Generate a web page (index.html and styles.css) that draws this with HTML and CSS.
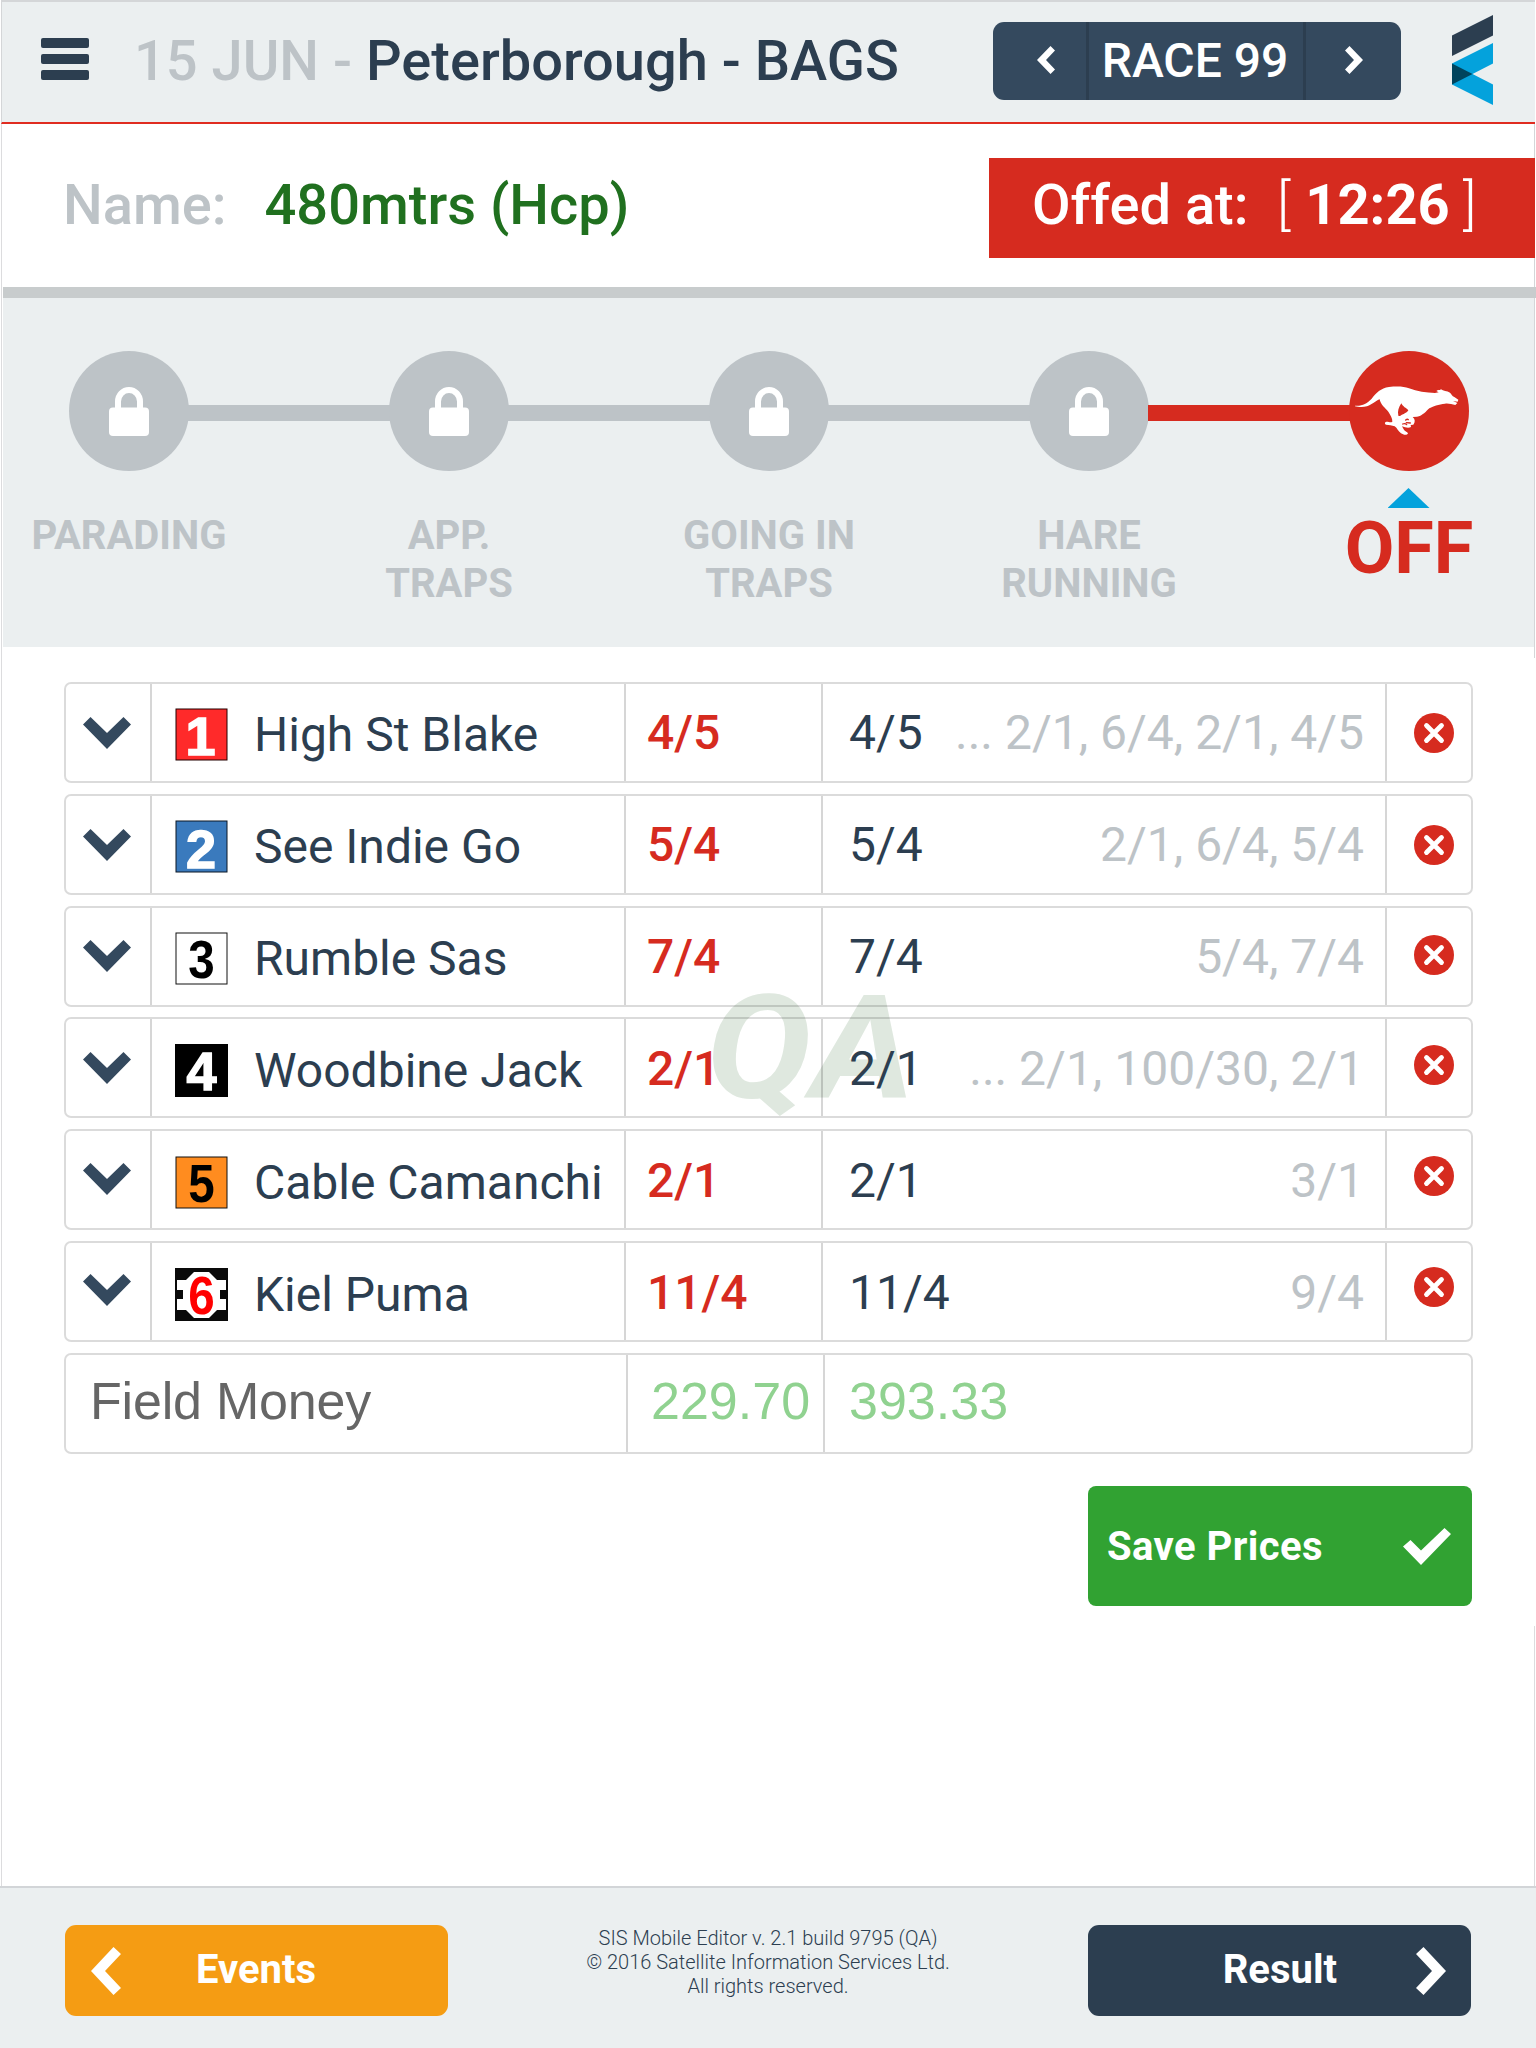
FILE: index.html
```html
<!DOCTYPE html>
<html lang="en">
<head>
<meta charset="utf-8">
<title>Peterborough - BAGS, Race 99</title>
<link rel="stylesheet" href="styles.css">
</head>
<body>
<svg class="defs" width="0" height="0">
  <symbol id="lock" viewBox="0 0 40 49"><path d="M9 22V14.500a11 11.500 0 0 1 22 0V22" fill="none" stroke="#fff" stroke-width="6"/><rect y="20.500" width="40" height="28.500" rx="4" fill="#fff"/></symbol>
  <symbol id="down" viewBox="0 0 48 32"><path d="M0 7.500 7.500 0 24 16 40.500 0 48 7.500 24 32Z" fill="#34495e"/></symbol>
  <symbol id="remove" viewBox="0 0 40 40"><circle cx="20" cy="20" r="20" fill="#d62b1f"/><path d="M12.500 12.500l15 15M27.500 12.500l-15 15" stroke="#fff" stroke-width="4.800" stroke-linecap="round"/></symbol>
</svg>
<div class="app">
  <header class="header">
    <button class="menu" aria-label="Menu"><i></i><i></i><i></i></button>
    <h1 class="title"><span class="date">15 JUN -</span> Peterborough - BAGS</h1>
    <div class="race">
      <button class="race-nav" aria-label="Previous race"><svg width="18" height="28" viewBox="0 0 18 28"><path d="M13.500 0 18 4.500 9 14l9 9.500-4.500 4.500L0 14Z" fill="#fff"/></svg></button>
      <span class="race-name">RACE 99</span>
      <button class="race-nav" aria-label="Next race"><svg width="18" height="28" viewBox="0 0 18 28"><path d="M4.500 0 0 4.500 9 14l-9 9.500L4.500 28 18 14Z" fill="#fff"/></svg></button>
    </div>
    <svg class="logo" width="41" height="90" viewBox="0 0 41 90"><path d="M0 20.500 41 0v20.500L0 41Z" fill="#2c3e50"/><path d="M0 48.500 41 28v20.500L20.500 59 41 69.500V90L0 69.500Z" fill="#04a2dc"/><path d="M0 48.500 20.500 59 0 69.500Z" fill="#00445d"/></svg>
  </header>

  <section class="info">
    <span class="info-label">Name:</span>
    <span class="info-name">480mtrs (Hcp)</span>
    <div class="offed"><span class="offed-label">Offed at:</span><span class="bracket">[</span><b>12:26</b><span class="bracket">]</span></div>
  </section>

  <ol class="steps">
    <li class="step"><span class="dot"><svg width="40" height="49"><use href="#lock"/></svg></span><span class="label">PARADING</span></li>
    <li class="step"><span class="dot"><svg width="40" height="49"><use href="#lock"/></svg></span><span class="label">APP.<br>TRAPS</span></li>
    <li class="step"><span class="dot"><svg width="40" height="49"><use href="#lock"/></svg></span><span class="label">GOING IN<br>TRAPS</span></li>
    <li class="step"><span class="dot"><svg width="40" height="49"><use href="#lock"/></svg></span><span class="label">HARE<br>RUNNING</span></li>
    <li class="step active"><span class="dot"><svg width="120" height="120" viewBox="58 34 360 360"><path fill="#fff" fill-rule="evenodd" d="M76 198C96 200 112 192 126 177C140 160 153 145 178 142C202 140 222 140 238 146C262 155 290 160 316 160L327 158L320 154C324 150 330 153 334 149C340 154 352 154 361 159C365 163 367 169 374 172L386 180L384 186L370 184L383 190L377 196C366 194 356 190 346 192C328 194 308 200 299 206C290 214 279 229 262 231L249 232C257 239 257 247 251 255L243 256L244 262C236 267 226 263 217 260L222 269C227 277 233 277 235 281C232 288 221 286 214 281C205 275 203 265 195 260C187 256 178 257 169 255C164 252 165 247 170 246C178 246 183 250 188 246C189 236 182 226 176 216C167 205 153 196 150 179C140 182 128 195 112 200C99 204 84 202 76 200ZM215 191C207 203 203 214 206 228C213 232 215 224 222 223C229 219 234 217 236 212C229 204 220 202 215 191Z"/><path d="M228 241q5-4 8-1M219 253q8-3 12 2M230 249l12 1" fill="none" stroke="#d62b1f" stroke-width="4" stroke-linecap="round"/></svg></span><span class="pointer"></span><span class="label">OFF</span></li>
  </ol>

  <main class="prices">
    <div class="watermark">QA</div>
    <div class="row">
      <button class="cell toggle"><svg width="48" height="32"><use href="#down"/></svg></button>
      <div class="cell runner"><svg class="trap" viewBox="0 0 53 53"><rect x="1" y="1" width="51" height="51" fill="#ff2a2a" stroke="#200"/><text x="25.500" y="46.500" class="digit light">1</text></svg>High St Blake</div>
      <div class="cell price">4/5</div>
      <div class="cell history"><span>4/5</span><span class="past">... 2/1, 6/4, 2/1, 4/5</span></div>
      <button class="cell remove"><svg width="40" height="40"><use href="#remove"/></svg></button>
    </div>
    <div class="row">
      <button class="cell toggle"><svg width="48" height="32"><use href="#down"/></svg></button>
      <div class="cell runner"><svg class="trap" viewBox="0 0 53 53"><rect x="1" y="1" width="51" height="51" fill="#3a7abd" stroke="#0b1624"/><text x="26" y="47.500" class="digit light">2</text></svg>See Indie Go</div>
      <div class="cell price">5/4</div>
      <div class="cell history"><span>5/4</span><span class="past">2/1, 6/4, 5/4</span></div>
      <button class="cell remove"><svg width="40" height="40"><use href="#remove"/></svg></button>
    </div>
    <div class="row">
      <button class="cell toggle"><svg width="48" height="32"><use href="#down"/></svg></button>
      <div class="cell runner"><svg class="trap" viewBox="0 0 53 53"><rect x="1" y="1" width="51" height="51" fill="#fff" stroke="#111"/><text transform="translate(26.500 45.500) scale(.88 1)" class="digit">3</text></svg>Rumble Sas</div>
      <div class="cell price">7/4</div>
      <div class="cell history"><span>7/4</span><span class="past">5/4, 7/4</span></div>
      <button class="cell remove"><svg width="40" height="40"><use href="#remove"/></svg></button>
    </div>
    <div class="row">
      <button class="cell toggle"><svg width="48" height="32"><use href="#down"/></svg></button>
      <div class="cell runner"><svg class="trap" viewBox="0 0 53 53"><rect width="53" height="53" fill="#000"/><text x="26.500" y="46" class="digit light">4</text></svg>Woodbine Jack</div>
      <div class="cell price">2/1</div>
      <div class="cell history"><span>2/1</span><span class="past">... 2/1, 100/30, 2/1</span></div>
      <button class="cell remove"><svg width="40" height="40"><use href="#remove"/></svg></button>
    </div>
    <div class="row">
      <button class="cell toggle"><svg width="48" height="32"><use href="#down"/></svg></button>
      <div class="cell runner"><svg class="trap" viewBox="0 0 53 53"><rect x="1" y="1" width="51" height="51" fill="#ff8c1f" stroke="#111"/><text transform="translate(26.500 45.500) scale(.88 1)" class="digit">5</text></svg>Cable Camanchi</div>
      <div class="cell price">2/1</div>
      <div class="cell history"><span>2/1</span><span class="past">3/1</span></div>
      <button class="cell remove"><svg width="40" height="40"><use href="#remove"/></svg></button>
    </div>
    <div class="row">
      <button class="cell toggle"><svg width="48" height="32"><use href="#down"/></svg></button>
      <div class="cell runner"><svg class="trap" viewBox="0 0 53 53"><rect width="53" height="53" fill="#0a0a0a"/><path d="M2 12H51V22H45V31H51V42H2V31H8V22H2ZM19 4H34L42 12V42L34 50H19L11 42V12Z" fill="#fff"/><text transform="translate(26.500 46) scale(.88 1)" class="digit red">6</text></svg>Kiel Puma</div>
      <div class="cell price">11/4</div>
      <div class="cell history"><span>11/4</span><span class="past">9/4</span></div>
      <button class="cell remove"><svg width="40" height="40"><use href="#remove"/></svg></button>
    </div>
    <div class="row total">
      <div class="cell total-label">Field Money</div>
      <div class="cell amount">229.70</div>
      <div class="cell amount">393.33</div>
    </div>
    <button class="save">Save Prices<svg width="48" height="37" viewBox="0 0 48 37"><path d="M0 18.500 7.500 12 18 22.500 41.500 0 48 6 18 37Z" fill="#fff"/></svg></button>
  </main>

  <footer class="footer">
    <button class="nav events"><svg width="30" height="48" viewBox="0 0 30 48"><path d="M22.500 0 30 7 14 24 30 41 22.500 48 0 24Z" fill="#fff"/></svg><span>Events</span></button>
    <p class="legal">SIS Mobile Editor v. 2.1 build 9795 (QA)<br>© 2016 Satellite Information Services Ltd.<br>All rights reserved.</p>
    <button class="nav result"><span>Result</span><svg width="30" height="48" viewBox="0 0 30 48"><path d="M7.500 0 0 7 16 24 0 41 7.500 48 30 24Z" fill="#fff"/></svg></button>
  </footer>
</div>
</body>
</html>
```
FILE: styles.css
```css
* { box-sizing: border-box; }
body { margin: 0; background: #fff; color: #2c3e50; font-family: Roboto, "Liberation Sans", sans-serif; }
button { border: 0; padding: 0; background: none; font: inherit; color: inherit; }
svg { display: block; flex: none; }
.defs { position: absolute; }

.app {
  display: flex;
  flex-direction: column;
  width: 1536px;
  height: 2048px;
  overflow: hidden;
  background:
    linear-gradient(#dcdcde, #dcdcde) 1px 1px / 1px 100% no-repeat,
    linear-gradient(#d4d6d8, #d4d6d8) 1534px 1px / 1px 657px no-repeat,
    linear-gradient(#dcdcde, #dcdcde) 1534px 1626px / 1px 262px no-repeat,
    #fff;
}

/* Header */
.header {
  display: flex;
  align-items: center;
  height: 124px;
  margin: 0 1px;
  padding: 0 42px 0 40px;
  border-top: 2px solid #d4d6d8;
  border-bottom: 2px solid #e02c20;
  border-left: 1px solid #d4d6d8;
  background: #ebeff0;
}
.menu { display: flex; flex-direction: column; gap: 6px; width: 48px; margin: -6px 0 0 -1px; }
.menu i { height: 10px; border-radius: 2px; background: #2c3e50; }
.title { margin: -2px 0 0 45px; font-size: 56px; font-weight: 500; line-height: 66px; white-space: nowrap; }
.date { color: #bdc3c7; }
.race {
  display: flex;
  align-items: center;
  width: 408px;
  height: 78px;
  margin-left: auto;
  margin-top: -3px;
  border-radius: 11px;
  background: #34495e;
  color: #fff;
}
.race-nav { display: flex; align-items: center; justify-content: center; width: 93px; height: 78px; padding-left: 12px; padding-bottom: 1px; }
.race-name { flex: 1; height: 78px; padding-right: 2px; border: solid #2c3e50; border-width: 0 3px; font-size: 48px; font-weight: 500; line-height: 78px; text-align: center; }
.race-nav:last-child { width: 95px; padding-left: 1px; }
.logo { margin: -5px 0 0 51px; }

/* Race info */
.info {
  display: flex;
  align-items: center;
  height: 174px;
  margin: 0 0 0 3px;
  padding-left: 60px;
  border-bottom: 11px solid #c8cccd;
  font-size: 56px;
  font-weight: 500;
  line-height: 66px;
}
.info-label { margin-top: -2px; color: #bdc3c7; }
.info-name { margin: -2px 0 0 38px; color: #20701f; }
.offed {
  display: flex;
  align-items: center;
  width: 546px;
  height: 100px;
  margin-left: auto;
  margin-right: 1px;
  margin-top: 5px;
  padding: 0 0 6px 43px;
  background: #d62b1f;
  color: #fff;
}
.offed-label { width: 245px; }
.bracket { width: 15px; font-weight: 300; }
.offed b { width: 171px; text-align: center; font-weight: 700; }

/* Progress */
.steps {
  display: flex;
  gap: 80px;
  height: 349px;
  margin: 0 2px 0 3px;
  padding: 53px 0 0 6px;
  list-style: none;
  background: #ebeff0;
}
.step { position: relative; display: flex; flex-direction: column; align-items: center; width: 240px; color: #bdc3c7; }
.step + .step::before { content: ""; position: absolute; top: 54px; right: 178px; width: 204px; height: 16px; background: #bdc3c7; }
.step.active::before { right: 177px; background: #d62b1f; }
.dot { display: flex; align-items: center; justify-content: center; width: 120px; height: 120px; border-radius: 50%; background: #bdc3c7; }
.step:not(.active) .dot { position: relative; }
.label { margin-top: 41px; font-size: 40px; font-weight: 700; line-height: 48px; text-align: center; }
.active .dot { z-index: 1; background: #d62b1f; }
.pointer { width: 42px; height: 20px; margin: 17px 1px 0 0; background: #04a2dc; clip-path: polygon(50% 0, 100% 100%, 0 100%); }
.active .label { margin-top: -1px; color: #d62b1f; font-size: 72px; line-height: 84px; }

/* Price table */
.prices { position: relative; display: flex; flex-direction: column; flex: 1; gap: 10.700px; padding: 35.400px 64px 0 64px; }
.watermark { position: absolute; left: 706px; top: 316px; color: #dfe8df; font-size: 145px; font-weight: 700; font-style: italic; line-height: 170px; transform: scaleX(1.09); transform-origin: 0 0; }
.row { position: relative; display: flex; flex: none; width: 1409px; height: 101px; border: 2px solid rgba(0, 0, 0, .14); border-radius: 7px; font-size: 48px; }
.cell { display: flex; align-items: center; border-right: 2px solid rgba(0, 0, 0, .16); white-space: nowrap; }
.cell:last-child { border-right: 0; }
.toggle { justify-content: center; width: 86px; padding-right: 2px; }
.runner { width: 474px; padding: 3px 0 0 23px; }
.trap { width: 53px; height: 53px; margin: 0 26px 0 0; overflow: visible; }
.digit { font: 700 54px "Liberation Sans", sans-serif; text-anchor: middle; fill: #000; }
.light { fill: #fff; stroke: #fff; stroke-width: 1.500px; }
.red { fill: #f00; }
.price { width: 197px; padding-left: 21px; color: #d62b1f; font-weight: 500; }
.history { justify-content: space-between; width: 564px; padding: 0 21px 0 26px; }
.past { color: #bdc3c7; }
.remove { flex: 1; padding-left: 27px; }
.row:nth-child(4) .remove { padding-bottom: 2px; }
.row:nth-child(5) .remove { padding-bottom: 6px; }
.row:nth-child(6) .remove { padding-bottom: 8px; }
.row:nth-child(7) .remove { padding-bottom: 9px; }
.row:nth-child(n+4) .runner { padding-top: 5px; }
.row:nth-child(n+6) .runner { padding-top: 6px; }
.row:nth-child(n+5) .price, .row:nth-child(n+5) .history { padding-top: 2px; }
.row:nth-child(n+6) .toggle { padding-bottom: 2px; }
.total { color: #666; font-family: "Liberation Sans", Arial, sans-serif; font-size: 52px; }
.total .cell { padding-bottom: 4px; }
.total-label { width: 562px; padding-left: 24px; letter-spacing: -.200px; }
.amount { width: 197px; padding-left: 23px; color: #90d290; }
.amount:last-child { padding-left: 24px; }
.save {
  display: flex;
  align-items: center;
  justify-content: space-between;
  align-self: flex-end;
  width: 384px;
  height: 120px;
  margin-top: 22px;
  padding: 0 21px 0 19px;
  border-radius: 8px;
  background: #31a232;
  color: #fff;
  font-size: 40px;
  font-weight: 700;
  letter-spacing: .430px;
}

/* Footer */
.footer { display: flex; align-items: flex-start; justify-content: space-between; height: 162px; padding: 37px 65px 0 65px; border-top: 2px solid #d2d5d8; background: #ebeff0; }
.nav { display: flex; align-items: center; width: 383px; height: 91px; border-radius: 11px; color: #fff; font-size: 40px; font-weight: 700; }
.events { gap: 75px; padding-left: 26px; background: #f59c13; }
.result { justify-content: flex-end; gap: 79px; padding-right: 25px; background: #2c3e50; }
.nav span { margin-top: -2px; }
.legal { margin: 1px 0 0; font-size: 20px; font-weight: 300; line-height: 24px; text-align: center; }
```
